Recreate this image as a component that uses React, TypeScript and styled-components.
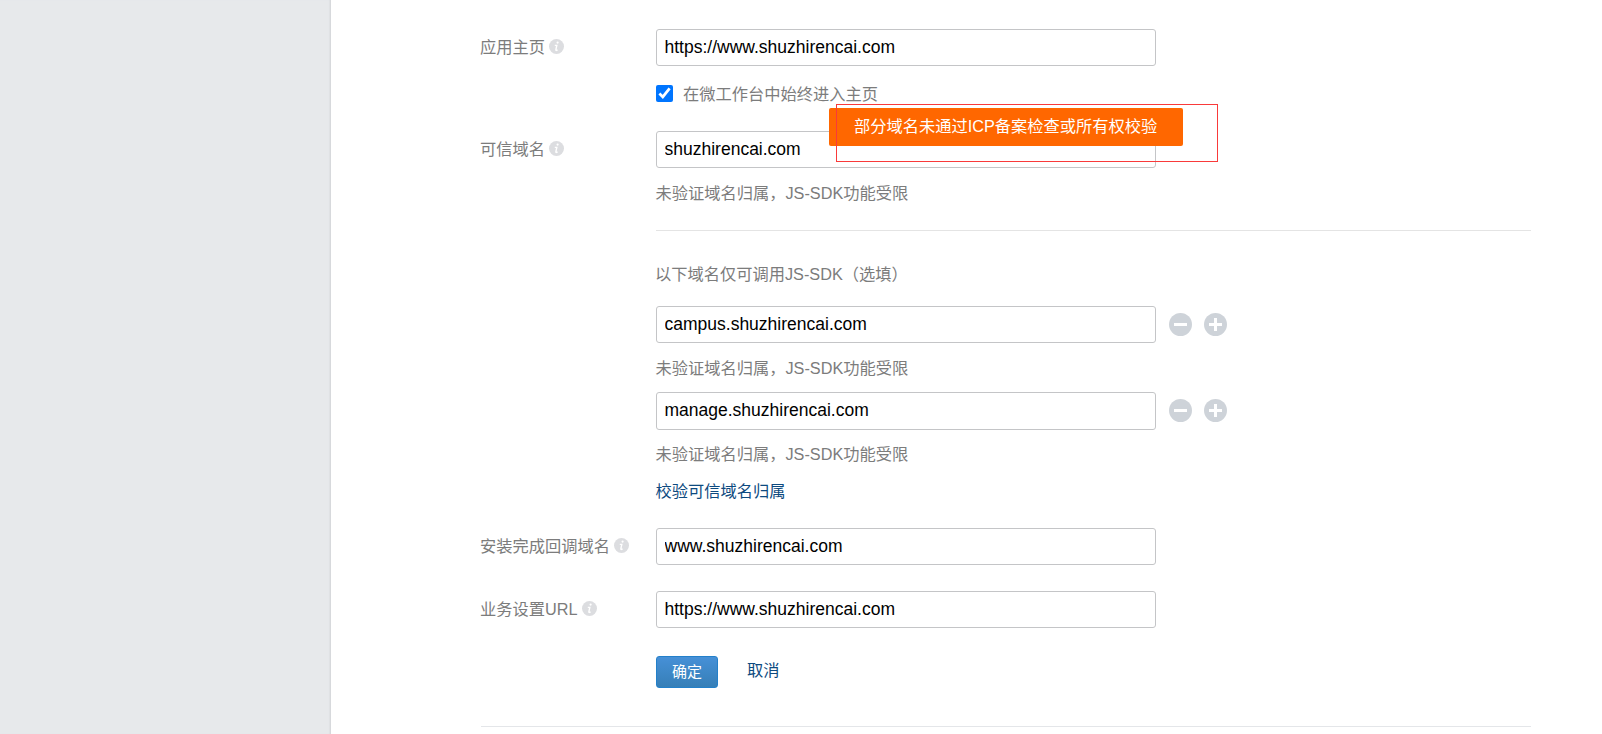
import React, { useCallback, useState, ChangeEvent } from 'react';
import styled, { createGlobalStyle } from 'styled-components';

const UNVERIFIED = '未验证域名归属，JS-SDK功能受限';

const InfoIcon: React.FC = () => (
  <InfoSvg viewBox="0 0 15 15">
    <circle cx="7.5" cy="7.5" r="7.5" fill="#dcdde0" />
    <circle cx="8.6" cy="3.6" r="1.1" fill="#fff" />
    <path
      d="M5.8 6.4h2L6.9 10.6q-.2 1 .7.8l1-.4"
      fill="none"
      stroke="#fff"
      strokeWidth="1.4"
    />
  </InfoSvg>
);

const RoundIcon: React.FC<{ plus?: boolean }> = ({ plus }) => (
  <svg width="23" height="23" viewBox="0 0 23 23">
    <circle cx="11.5" cy="11.5" r="11.5" fill="#ced3d9" />
    <path
      d={plus ? 'M5 11.5h13M11.5 5v13' : 'M5 11.5h13'}
      stroke="#fff"
      strokeWidth="3"
    />
  </svg>
);

const App: React.FC = () => {
  const [home, setHome] = useState('https://www.shuzhirencai.com');
  const [alwaysHome, setAlwaysHome] = useState(true);
  const [trusted, setTrusted] = useState('shuzhirencai.com');
  const [domains, setDomains] = useState([
    'campus.shuzhirencai.com',
    'manage.shuzhirencai.com',
  ]);
  const [callback, setCallback] = useState('www.shuzhirencai.com');
  const [settingUrl, setSettingUrl] = useState('https://www.shuzhirencai.com');

  const onChangeDomain = useCallback((index: number, value: string) => {
    setDomains(list => list.map((item, i) => (i === index ? value : item)));
  }, []);

  const onAdd = useCallback((index: number) => {
    setDomains(list => [
      ...list.slice(0, index + 1),
      '',
      ...list.slice(index + 1),
    ]);
  }, []);

  const onRemove = useCallback((index: number) => {
    setDomains(list => list.filter((_, i) => i !== index));
  }, []);

  return (
    <Page>
      <GlobalStyle />
      <Sidebar />
      <Main>
        <Form>
          <Row>
            <Label>
              应用主页
              <InfoIcon />
            </Label>
            <Field>
              <Input
                value={home}
                onChange={(e: ChangeEvent<HTMLInputElement>) =>
                  setHome(e.target.value)
                }
              />
              <CheckLabel>
                <Checkbox
                  type="checkbox"
                  checked={alwaysHome}
                  onChange={() => setAlwaysHome(!alwaysHome)}
                />
                在微工作台中始终进入主页
              </CheckLabel>
            </Field>
          </Row>

          <Row $top={27}>
            <Label>
              可信域名
              <InfoIcon />
            </Label>
            <Field>
              <InputWrap>
                <Input
                  value={trusted}
                  onChange={(e: ChangeEvent<HTMLInputElement>) =>
                    setTrusted(e.target.value)
                  }
                />
                <Tooltip>部分域名未通过ICP备案检查或所有权校验</Tooltip>
                <Mark />
              </InputWrap>
              <Hint>{UNVERIFIED}</Hint>
              <Divider />
              <OptionalTitle>以下域名仅可调用JS-SDK（选填）</OptionalTitle>
              {domains.map((domain, index) => (
                <DomainItem key={index}>
                  <DomainLine>
                    <Input
                      $tall={index > 0}
                      value={domain}
                      onChange={(e: ChangeEvent<HTMLInputElement>) =>
                        onChangeDomain(index, e.target.value)
                      }
                    />
                    <IconButton onClick={() => onRemove(index)}>
                      <RoundIcon />
                    </IconButton>
                    <IconButton onClick={() => onAdd(index)}>
                      <RoundIcon plus />
                    </IconButton>
                  </DomainLine>
                  <Hint>{UNVERIFIED}</Hint>
                </DomainItem>
              ))}
              <VerifyLink href="#">校验可信域名归属</VerifyLink>
            </Field>
          </Row>

          <Row $top={27}>
            <Label>
              安装完成回调域名
              <InfoIcon />
            </Label>
            <Input
              value={callback}
              onChange={(e: ChangeEvent<HTMLInputElement>) =>
                setCallback(e.target.value)
              }
            />
          </Row>

          <Row $top={26}>
            <Label>
              业务设置URL
              <InfoIcon />
            </Label>
            <Input
              value={settingUrl}
              onChange={(e: ChangeEvent<HTMLInputElement>) =>
                setSettingUrl(e.target.value)
              }
            />
          </Row>

          <Actions>
            <Submit>确定</Submit>
            <Cancel href="#">取消</Cancel>
          </Actions>
        </Form>
      </Main>
    </Page>
  );
};

export default App;

const GlobalStyle = createGlobalStyle`
  * {
    box-sizing: border-box;
  }

  body {
    margin: 0;
    background: #fff;
    overflow: hidden;
    font-family: 'Liberation Sans', 'Noto Sans CJK SC', sans-serif;
    font-size: 16.25px;
    color: #7c7c7c;
  }
`;

const Page = styled.div`
  display: flex;
  height: 734px;
  overflow: hidden;
`;

const Sidebar = styled.div`
  width: 331px;
  flex-shrink: 0;
  background: #e7e9eb;
  border-right: 1px solid #d7d9dc;
  box-shadow: inset -1px 0 1px #dfe1e4;
`;

const Main = styled.div`
  flex: 1;
  padding: 29px 71px 0 150px;
`;

const Form = styled.div`
  height: 698px;
  border-bottom: 1px solid #e4e6e9;
`;

const Row = styled.div<{ $top?: number }>`
  display: flex;
  align-items: flex-start;
  margin-top: ${({ $top }) => $top || 0}px;
`;

const Label = styled.div`
  display: flex;
  align-items: center;
  width: 176px;
  height: 34px;
  margin-left: -1px;
  flex-shrink: 0;
  white-space: nowrap;
`;

const InfoSvg = styled.svg`
  width: 15px;
  height: 15px;
  margin-left: 4px;
`;

const Field = styled.div`
  flex: 1;
`;

const InputWrap = styled.div`
  position: relative;
  height: 37px;
`;

const Input = styled.input<{ $tall?: boolean }>`
  display: block;
  width: 500px;
  height: ${({ $tall }) => ($tall ? 38 : 37)}px;
  padding: 0 7.5px ${({ $tall }) => ($tall ? 1 : 0)}px;
  border: 1px solid #c4c5c7;
  border-radius: 3px;
  background: #fff;
  color: #000;
  font-family: inherit;
  font-size: 17.5px;
  outline: none;
`;

const CheckLabel = styled.label`
  display: flex;
  align-items: center;
  height: 20px;
  margin-top: 18px;
  line-height: 20px;
`;

const Checkbox = styled.input`
  width: 17px;
  height: 17px;
  margin: 0 10px 2px 0;
  accent-color: #0075ff;
`;

const Tooltip = styled.div`
  position: absolute;
  left: 173px;
  top: -23px;
  width: 354px;
  height: 38px;
  padding-left: 25px;
  border-radius: 2px;
  background: #ff6700;
  color: #fff;
  line-height: 37px;
  white-space: nowrap;
`;

const Mark = styled.div`
  position: absolute;
  left: 180px;
  top: -27px;
  width: 382px;
  height: 58px;
  border: 1px solid #f93a3a;
  pointer-events: none;
`;

const Hint = styled.div`
  height: 20px;
  margin: 15px 0 0 -0.5px;
  line-height: 20px;
`;

const Divider = styled.div`
  height: 1px;
  margin-top: 27px;
  background: #e4e4e4;
`;

const OptionalTitle = styled.div`
  height: 20px;
  margin: 33px 0 22px -1px;
  line-height: 20px;
`;

const DomainItem = styled.div`
  height: 86px;
`;

const DomainLine = styled.div`
  display: flex;
  align-items: center;
  height: 37px;
`;

const IconButton = styled.button`
  display: flex;
  margin: 0 -1px 0 13px;
  padding: 0;
  border: 0;
  background: none;
  cursor: pointer;
`;

const VerifyLink = styled.a`
  display: block;
  height: 20px;
  margin: 3px 0 0 -0.5px;
  color: #0d4a80;
  line-height: 20px;
  text-decoration: none;
`;

const Actions = styled.div`
  display: flex;
  align-items: center;
  margin: 28px 0 0 175px;
`;

const Submit = styled.button`
  width: 62px;
  height: 32px;
  padding: 0 0 3px;
  border: 1px solid #2380ca;
  border-radius: 3px;
  background: linear-gradient(#4690d7, #367fb7);
  color: #fff;
  font-family: inherit;
  font-size: 15px;
`;

const Cancel = styled.a`
  margin: 0 0 6px 29px;
  color: #0d4a80;
  text-decoration: none;
`;
